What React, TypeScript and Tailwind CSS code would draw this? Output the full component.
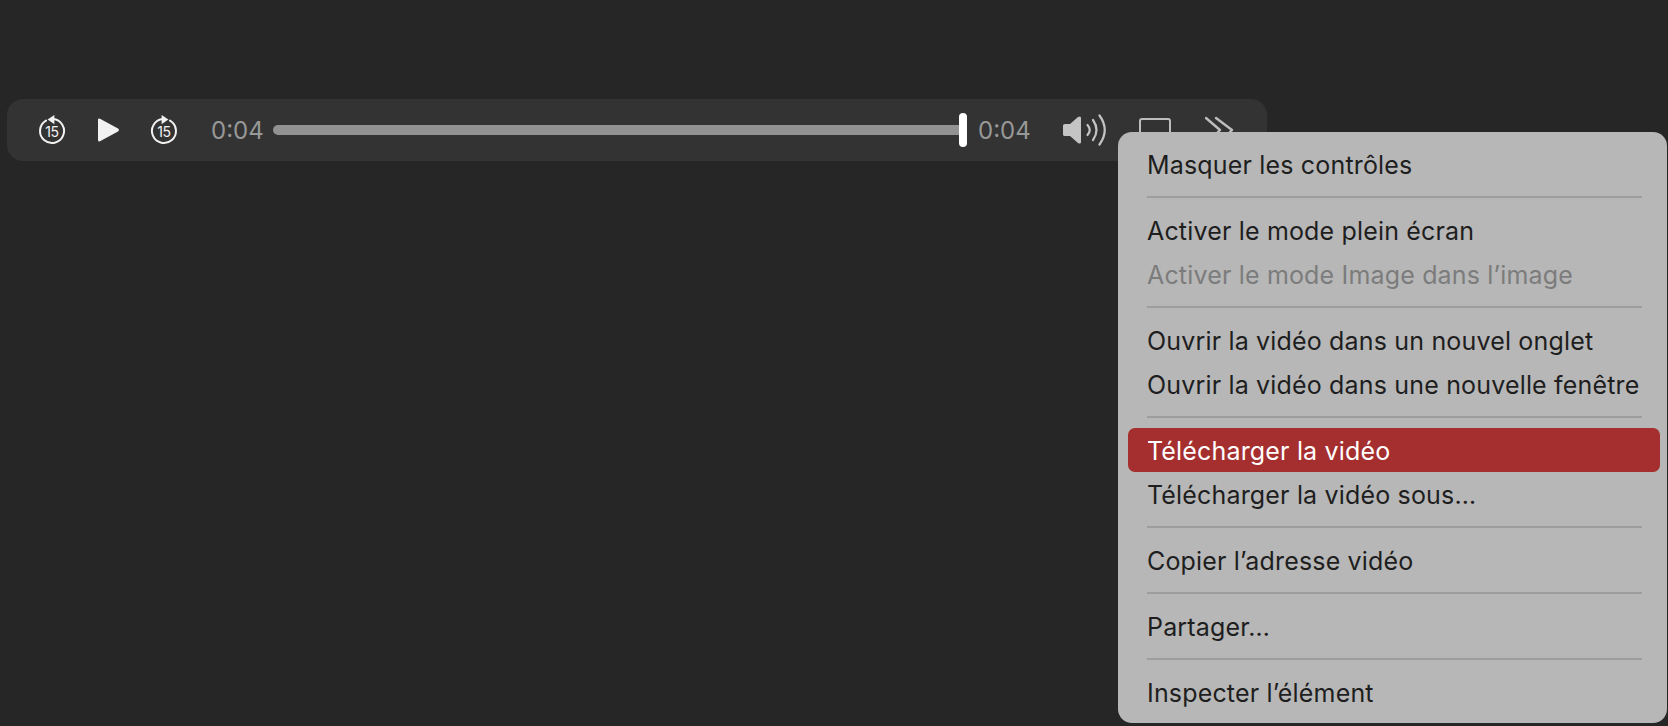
import React from "react";

const Skip = ({ flip }: { flip?: boolean }) => (
  <div className="relative w-[28px] h-[32px] shrink-0 -mt-[3px]">
    <svg viewBox="0 0 28 32" className="absolute inset-0 w-full h-full" fill="none">
      <g transform={flip ? "translate(28 0) scale(-1 1)" : undefined}>
        <path d="M15 6 A12 12 0 1 1 8 7.6" stroke="#f2f2f2" strokeWidth="2" strokeLinecap="round" fill="none" />
        <path d="M16.4 2 L16.4 11.2 L9.6 6.6 Z" fill="#f2f2f2" />
      </g>
    </svg>
    <span className="absolute inset-x-0 top-[10px] text-center text-[14px] leading-[17px] text-[#f2f2f2] font-['Inter',sans-serif] font-normal tracking-[-0.3px]">15</span>
  </div>
);

const Row = ({ label, disabled, active }: { label: string; disabled?: boolean; active?: boolean }) => (
  <div className={`h-[44px] flex items-center pl-[19px] pt-[3px] rounded-[7px] text-[25px] tracking-[0.17px] whitespace-nowrap ${active ? "bg-[#a52e2e] text-white" : disabled ? "text-[#7c7c7c]" : "text-[#1e1e1e]"}`}>
    {label}
  </div>
);

const Sep = () => (
  <div className="h-[22px] flex items-center pl-[19px] pr-[18px]">
    <div className="h-[2px] w-full bg-[#9d9d9d]" />
  </div>
);

export default function App() {
  return (
    <div className="relative w-[1668px] h-[726px] bg-[#262626] overflow-hidden font-['Inter',sans-serif] pt-[99px] pl-[7px]">
      <div className="w-[1260px] h-[62px] rounded-[16px] bg-[#333333] flex items-center pl-[31px]">
        <Skip />
        <svg viewBox="0 0 24 26" className="ml-[30px] w-[24px] h-[26px] shrink-0">
          <path d="M2 3 Q2 1 4 1.8 L22 11.6 Q24 13 22 14.4 L4 24.2 Q2 25 2 23 Z" fill="#f2f2f2" />
        </svg>
        <div className="ml-[30px]"><Skip flip /></div>
        <span className="ml-[33px] w-[52px] text-[24px] text-[#989898] pt-[1px]">0:04</span>
        <div className="ml-[10px] flex items-center">
          <div className="w-[686px] h-[10px] rounded-l-full bg-[#929292]" />
          <div className="w-[8px] h-[34px] rounded-full bg-white" />
        </div>
        <span className="ml-[11px] w-[52px] text-[24px] text-[#989898] pt-[1px]">0:04</span>
        <svg viewBox="0 0 46 34" className="ml-[32px] w-[46px] h-[34px] shrink-0" fill="none">
          <path d="M1 12.5 Q1 11 3 11 L8 11 L16 4 Q19 2.5 19 5 L19 29 Q19 31.5 16 30 L8 23 L3 23 Q1 23 1 21.5 Z" fill="#c4c4c4" />
          <path d="M25.5 12 Q30 17 25.5 22" stroke="#c4c4c4" strokeWidth="2.2" strokeLinecap="round" />
          <path d="M31 7 Q38 17 31 27" stroke="#c4c4c4" strokeWidth="2.2" strokeLinecap="round" />
          <path d="M37.5 2.5 Q48 17 37.5 31.5" stroke="#c4c4c4" strokeWidth="2.2" strokeLinecap="round" />
        </svg>
        <div className="ml-[31px] w-[32px] h-[26px] mt-[1px] rounded-[3px] border-2 border-[#bdbdbd] shrink-0" />
        <svg viewBox="0 0 30 24" className="ml-[34px] w-[30px] h-[24px] -mt-[4px] shrink-0" fill="none">
          <path d="M1 2 L15 14 M11 2 L27 14 M15 14 L11 18 M27 14 L23 18" stroke="#bdbdbd" strokeWidth="2.4" strokeLinecap="round" />
        </svg>
      </div>

      <div className="absolute left-[1118px] top-[132px] w-[549px] h-[591px] rounded-[14px] bg-[#b7b7b7] pt-[10px] pl-[10px] pr-[7px]">
        <Row label="Masquer les contrôles" />
        <Sep />
        <Row label="Activer le mode plein écran" />
        <Row label="Activer le mode Image dans l’image" disabled />
        <Sep />
        <Row label="Ouvrir la vidéo dans un nouvel onglet" />
        <Row label="Ouvrir la vidéo dans une nouvelle fenêtre" />
        <Sep />
        <Row label="Télécharger la vidéo" active />
        <Row label="Télécharger la vidéo sous…" />
        <Sep />
        <Row label="Copier l’adresse vidéo" />
        <Sep />
        <Row label="Partager…" />
        <Sep />
        <Row label="Inspecter l’élément" />
      </div>
    </div>
  );
}
